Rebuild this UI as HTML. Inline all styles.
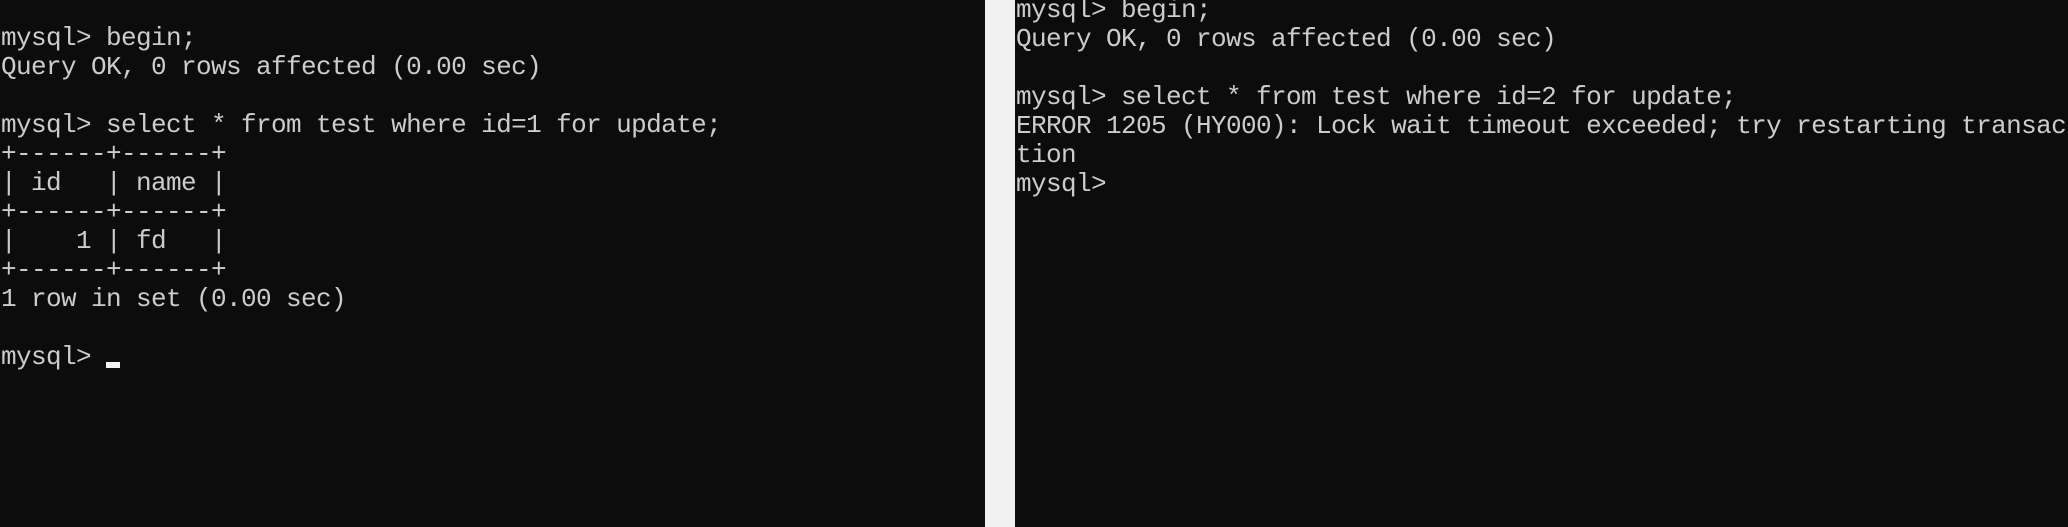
<!DOCTYPE html>
<html><head><meta charset="utf-8"><style>
html,body{margin:0;padding:0;width:2068px;height:527px;overflow:hidden;background:#f0f0f0;}
.p{position:absolute;top:0;height:527px;background:#0c0c0c;overflow:hidden;}
pre{margin:0;position:absolute;left:1px;font-family:"Liberation Mono",monospace;font-size:26px;letter-spacing:-0.6px;line-height:29px;color:#cccccc;white-space:pre;}
.cur{position:absolute;left:106px;top:362px;width:14px;height:6px;background:#f2f2f2;}
</style></head><body>
<div class="p" style="left:0;width:985px;">
<pre style="top:24px;">mysql&gt; begin;
Query OK, 0 rows affected (0.00 sec)

mysql&gt; select * from test where id=1 for update;
+------+------+
| id   | name |
+------+------+
|    1 | fd   |
+------+------+
1 row in set (0.00 sec)

mysql&gt; </pre>
<div class="cur"></div>
</div>
<div class="p" style="left:1015px;width:1053px;">
<pre style="top:-4px;">mysql&gt; begin;
Query OK, 0 rows affected (0.00 sec)

mysql&gt; select * from test where id=2 for update;
ERROR 1205 (HY000): Lock wait timeout exceeded; try restarting transac
tion
mysql&gt;</pre>
</div>
</body></html>
